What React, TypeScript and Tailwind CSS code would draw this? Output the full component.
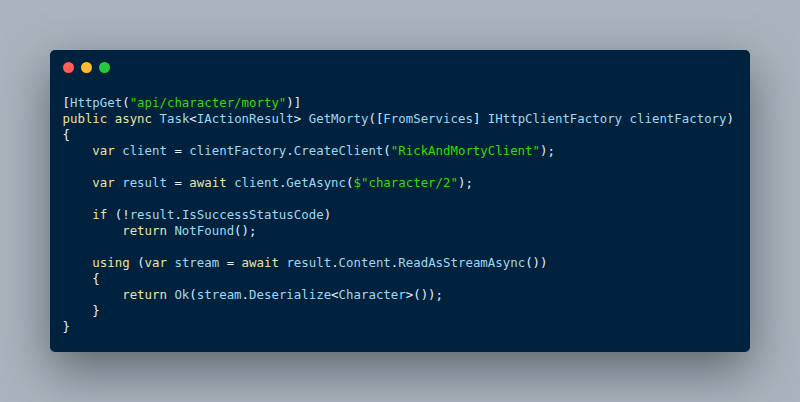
import React from "react";

const K = ({ children }: { children: React.ReactNode }) => <span className="text-[#e8e4a6]">{children}</span>;
const S = ({ children }: { children: React.ReactNode }) => <span className="text-[#3ad900]">{children}</span>;
const P = ({ children }: { children: React.ReactNode }) => <span className="text-[#e1efff]">{children}</span>;

export default function App() {
  return (
    <div className="w-[800px] h-[402px] bg-[#aab4be] p-[50px] overflow-hidden">
      <div className="w-[700px] h-[302px] bg-[#01223f] rounded-[5px] shadow-[0_18px_50px_rgba(40,50,60,0.6)] pt-[12px] pl-[12.5px]">
        <div className="flex gap-[7px]">
          <div className="w-[11px] h-[11px] rounded-full bg-[#ff5f56]" />
          <div className="w-[11px] h-[11px] rounded-full bg-[#ffbd2e]" />
          <div className="w-[11px] h-[11px] rounded-full bg-[#27c93f]" />
        </div>
        <pre
          className="mt-[22px] text-[#9fd8ef] text-[12.4px] leading-[16px]"
          style={{ fontFamily: '"DejaVu Sans Mono", monospace' }}
        >
{<><P>[</P>HttpGet<P>(</P><S>"api/character/morty"</S><P>)]</P></>}{"\n"}
{<><K>public</K> <K>async</K> Task<P>&lt;</P>IActionResult<P>&gt;</P> GetMorty<P>([</P>FromServices<P>]</P> IHttpClientFactory clientFactory<P>)</P></>}{"\n"}
{<P>{"{"}</P>}{"\n"}
{<>    <K>var</K> client <P>=</P> clientFactory<P>.</P>CreateClient<P>(</P><S>"RickAndMortyClient"</S><P>);</P></>}{"\n"}
{"\n"}
{<>    <K>var</K> result <P>=</P> <K>await</K> client<P>.</P>GetAsync<P>(</P><S>$"character/2"</S><P>);</P></>}{"\n"}
{"\n"}
{<>    <K>if</K> <P>(!</P>result<P>.</P>IsSuccessStatusCode<P>)</P></>}{"\n"}
{<>        <K>return</K> NotFound<P>();</P></>}{"\n"}
{"\n"}
{<>    <K>using</K> <P>(</P><K>var</K> stream <P>=</P> <K>await</K> result<P>.</P>Content<P>.</P>ReadAsStreamAsync<P>())</P></>}{"\n"}
{<>    <P>{"{"}</P></>}{"\n"}
{<>        <K>return</K> Ok<P>(</P>stream<P>.</P>Deserialize<P>&lt;</P>Character<P>&gt;());</P></>}{"\n"}
{<>    <P>{"}"}</P></>}{"\n"}
{<P>{"}"}</P>}
        </pre>
      </div>
    </div>
  );
}
